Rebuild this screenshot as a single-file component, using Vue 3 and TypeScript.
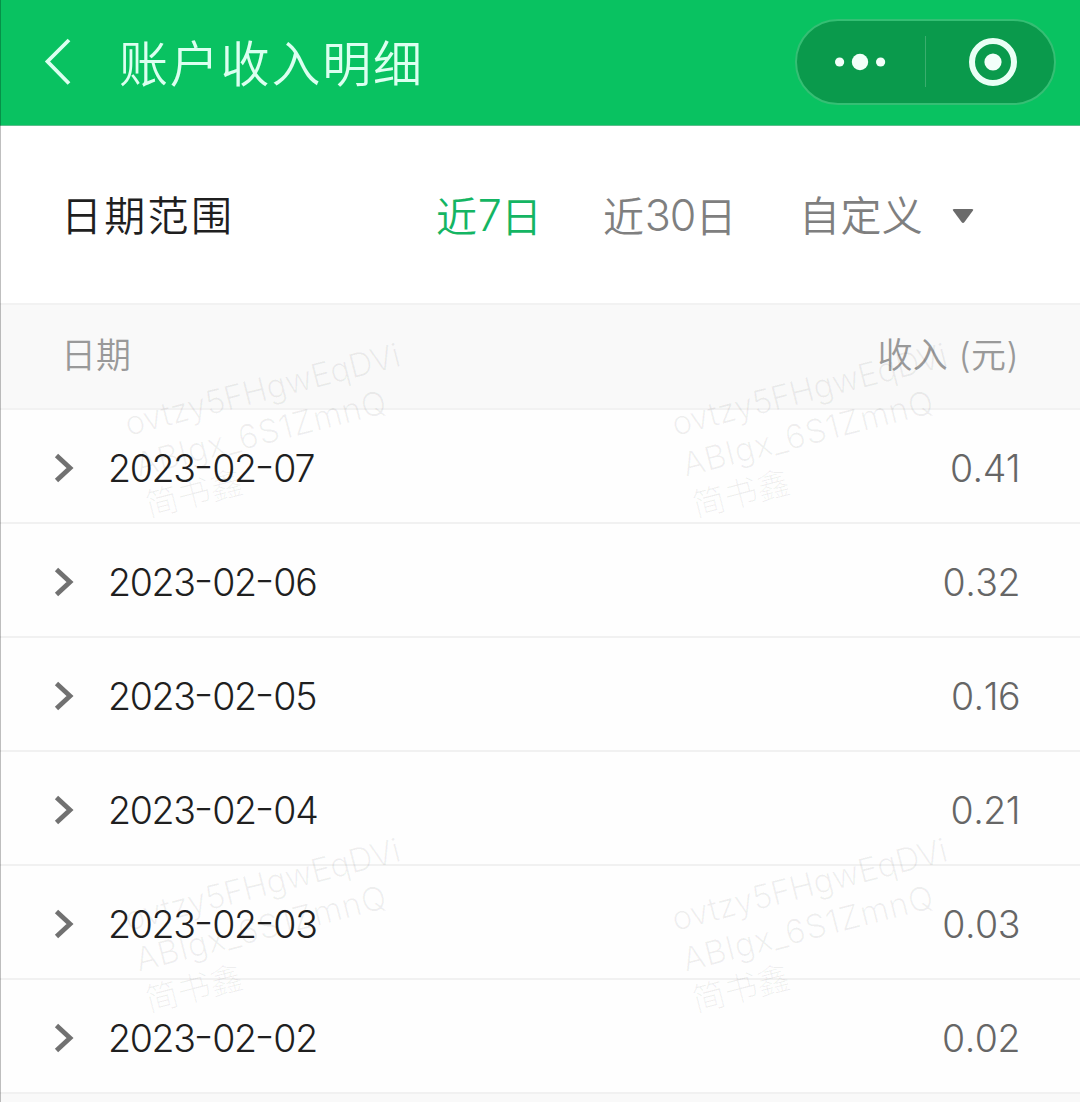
<script setup lang="ts">
interface IncomeRow {
  date: string
  amount: string
}

const rows: IncomeRow[] = [
  { date: '2023-02-07', amount: '0.41' },
  { date: '2023-02-06', amount: '0.32' },
  { date: '2023-02-05', amount: '0.16' },
  { date: '2023-02-04', amount: '0.21' },
  { date: '2023-02-03', amount: '0.03' },
  { date: '2023-02-02', amount: '0.02' },
]

const watermarkLines: string[] = ['ovtzy5FHgwEqDVi', 'ABlgx_6S1ZmnQ', '简书鑫']
</script>

<template>
  <div class="page">
    <header class="navbar">
      <svg class="back" width="28" height="48" viewBox="0 0 28 48" fill="none">
        <path d="M25 2 L3.5 23.5 L25 45.5" stroke="#dcfff0" stroke-width="3.8" />
      </svg>
      <h1 class="title">账户收入明细</h1>
      <div class="capsule">
        <svg class="more" width="52" height="18" viewBox="0 0 52 18" fill="#f2fff9">
          <circle cx="5.6" cy="9" r="4.6" />
          <circle cx="26" cy="9" r="8.2" />
          <circle cx="46.6" cy="9" r="4.6" />
        </svg>
        <span class="divider"></span>
        <svg class="target" width="50" height="50" viewBox="0 0 50 50">
          <circle cx="25" cy="25" r="21" fill="none" stroke="#e9fff5" stroke-width="6" />
          <circle cx="25" cy="25" r="8.6" fill="#f2fff9" />
        </svg>
      </div>
    </header>

    <section class="filter">
      <span class="label">日期范围</span>
      <span class="tab seven active">近<i>7</i>日</span>
      <span class="tab thirty">近<i>30</i>日</span>
      <span class="tab custom">自定义</span>
      <svg class="caret" width="22" height="16" viewBox="0 0 22 16">
        <path d="M2 1 H20 Q22 1 20.8 2.8 L12.5 14 Q11 15.8 9.5 14 L1.2 2.8 Q0 1 2 1 Z" fill="#6b6b6b" />
      </svg>
    </section>

    <section class="table">
      <div class="head">
        <span class="head-date">日期</span>
        <span class="head-income">收入 (元)</span>
      </div>
      <div v-for="row in rows" :key="row.date" class="row">
        <svg class="arrow" width="20" height="30" viewBox="0 0 20 30" fill="none">
          <path d="M2.5 2.5 L16 15 L2.5 27.5" stroke="#717171" stroke-width="4.8" />
        </svg>
        <span class="date"><template v-for="(part, i) in row.date.split('-')" :key="i"><span v-if="i > 0" class="dash">-</span>{{ part }}</template></span>
        <span class="amount">{{ row.amount }}</span>
      </div>
    </section>

    <div class="watermarks">
      <div v-for="n in 4" :key="n" class="tile">
        <div class="mark">
          <div v-for="(line, i) in watermarkLines" :key="line" :class="['line', 'line-' + i]">{{ line }}</div>
        </div>
      </div>
    </div>
  </div>
</template>

<style>
body {
  margin: 0;
  background: #f8f8f8;
}
</style>

<style scoped>
.page {
  position: relative;
  box-sizing: border-box;
  width: 1080px;
  height: 1102px;
  overflow: hidden;
  background: #f9f9f9;
  font-family: Inter, 'Noto Sans CJK SC', sans-serif;
  font-weight: 300;
  white-space: nowrap;
}

.page::after {
  content: '';
  position: absolute;
  left: 0;
  top: 0;
  width: 1px;
  height: 100%;
  background: rgba(0, 0, 0, 0.25);
}

.navbar {
  box-sizing: border-box;
  display: flex;
  align-items: center;
  height: 126px;
  padding: 0 24px 2px 44px;
  background: #09c261;
  border-bottom: 1px solid #5cbd8c;
}

.title {
  margin: 7px 0 0 47px;
  color: #dcfff0;
  font-size: 49px;
  font-weight: 350;
  line-height: 70px;
  letter-spacing: 1.8px;
}

.capsule {
  box-sizing: border-box;
  display: flex;
  align-items: center;
  width: 261px;
  height: 86px;
  margin-left: auto;
  padding-left: 37px;
  border: 2px solid #35bf74;
  border-radius: 43px;
  background: #0a9a4c;
}

.divider {
  width: 1px;
  height: 51px;
  margin-left: 39px;
  background: #3aae6e;
}

.target {
  margin-left: 42px;
}

.filter {
  box-sizing: border-box;
  display: flex;
  align-items: center;
  height: 177px;
  padding: 3px 0 0 61px;
  background: #fff;
  line-height: 60px;
}

.label {
  width: 375px;
  color: #1f1f1f;
  font-size: 41px;
  font-weight: 350;
  letter-spacing: 2.3px;
}

.tab {
  color: #7f7f7f;
  font-size: 41px;
  font-weight: 350;
}

.tab i {
  display: inline-block;
  font-size: 43px;
  font-style: normal;
  font-weight: 300;
  letter-spacing: -1px;
  transform: translateY(-1px);
}

.active {
  color: #14b563;
}

.seven {
  width: 167px;
  letter-spacing: 0.8px;
}

.thirty {
  width: 196px;
  letter-spacing: 0.8px;
}

.custom {
  width: 153px;
  letter-spacing: 0.4px;
}

.head {
  box-sizing: border-box;
  display: flex;
  align-items: center;
  justify-content: space-between;
  height: 107px;
  padding: 0 61px 8px 61px;
  background: #f9f9f9;
  border-top: 2px solid #f2f2f2;
  border-bottom: 2px solid #f2f2f2;
  color: #999;
  font-size: 35px;
  font-weight: 350;
}

.head-income {
  letter-spacing: 0.4px;
}

.row {
  box-sizing: border-box;
  display: flex;
  align-items: center;
  height: 114px;
  padding: 4px 60px 0 54px;
  background: #fefefe;
  border-bottom: 2px solid #f1f1f1;
  font-size: 37.5px;
}

.date {
  margin-left: 34px;
  color: #1f1f1f;
  letter-spacing: -1.3px;
}

.dash {
  display: inline-block;
  width: 17.5px;
  transform: translateY(-3px) scaleX(1.15);
}

.amount {
  margin-left: auto;
  color: #666;
  font-kerning: none;
  letter-spacing: -0.5px;
}

.watermarks {
  position: absolute;
  left: 120px;
  top: 334px;
  display: grid;
  grid-template-columns: 546.5px 546.5px;
  grid-auto-rows: 495px;
  pointer-events: none;
}

.mark {
  width: 290px;
  transform: translate(0, 70px) rotate(-14.4deg);
  transform-origin: 0 0;
  color: rgba(0, 0, 0, 0.06);
  font-size: 33px;
  line-height: 42px;
}

.line-0 {
  letter-spacing: -0.2px;
}

.line-1 {
  letter-spacing: 0.7px;
}
</style>
